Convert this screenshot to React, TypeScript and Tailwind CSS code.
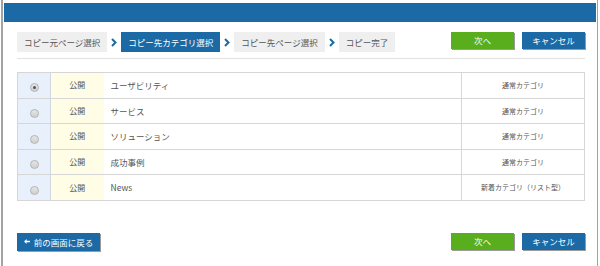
import React from 'react';

const FONT = { fontFamily: '"Noto Sans CJK JP", "Noto Sans", sans-serif' };

const steps = [
  { label: 'コピー元ページ選択', active: false },
  { label: 'コピー先カテゴリ選択', active: true },
  { label: 'コピー先ページ選択', active: false },
  { label: 'コピー完了', active: false },
];

const rows = [
  { name: 'ユーザビリティ', type: '通常カテゴリ', checked: true },
  { name: 'サービス', type: '通常カテゴリ', checked: false },
  { name: 'ソリューション', type: '通常カテゴリ', checked: false },
  { name: '成功事例', type: '通常カテゴリ', checked: false },
  { name: 'News', type: '新着カテゴリ（リスト型）', checked: false },
];

function Chevron() {
  return (
    <svg width="6" height="9" viewBox="0 0 6 9" className="mx-[4px]">
      <path d="M1 1 L4.5 4.5 L1 8" fill="none" stroke="#1b6aa5" strokeWidth="2" />
    </svg>
  );
}

function Radio({ checked }: { checked: boolean }) {
  return (
    <span className="inline-flex h-[9px] w-[9px] items-center justify-center rounded-full border border-[#b5b5b5] bg-gradient-to-b from-[#e6e6e6] to-[#cfcfcf] align-middle">
      {checked && <span className="h-[3px] w-[3px] rounded-full bg-[#555]" />}
    </span>
  );
}

function ActionButtons() {
  return (
    <div className="flex gap-[8px]">
      <button className="h-[17px] w-[63px] bg-[#58ae1c] text-[8.5px] leading-none text-white shadow-[1px_1px_0_#9a9a9a]">
        次へ
      </button>
      <button className="h-[17px] w-[63px] bg-[#1b6aa5] text-[8.5px] leading-none text-white shadow-[1px_1px_0_#9a9a9a]">
        キャンセル
      </button>
    </div>
  );
}

export default function App() {
  return (
    <div className="h-[266px] w-[600px] overflow-hidden bg-white pl-[1px] pr-[2px]" style={FONT}>
      <div className="flex h-full flex-col border-l-2 border-r border-[#a3a3a3] px-[1px] pt-[3px]">
        <div className="h-[19px] bg-[#1b6aa5]" />

        <div className="pl-[13px] pr-[11px]">
          <div className="mt-[10px] flex items-start justify-between">
            <div className="flex items-center">
              {steps.map((s, i) => (
                <React.Fragment key={i}>
                  {i > 0 && <Chevron />}
                  <div
                    className={
                      s.active
                        ? 'flex h-[20px] items-center bg-[#1b6aa5] px-[7px] text-[8.5px] text-white'
                        : 'flex h-[20px] items-center bg-[#efefef] px-[7px] text-[8.5px] text-[#555]'
                    }
                  >
                    {s.label}
                  </div>
                </React.Fragment>
              ))}
            </div>
            <ActionButtons />
          </div>

          <div className="mt-[6px] h-px bg-[#e2e2e2]" />

          <table className="mt-[13px] w-full border-collapse border border-[#d6d6d6] text-[#555]">
            <tbody>
              {rows.map((r, i) => (
                <tr key={i} className="h-[25.6px] border-b border-[#d6d6d6]">
                  <td className="w-[33px] border-r border-[#cfd8e2] bg-[#e8f1fb] p-0 text-center align-middle leading-none">
                    <Radio checked={r.checked} />
                  </td>
                  <td className="w-[53px] bg-[#fffde6] p-0 text-center text-[8px]">公開</td>
                  <td className="p-0 pl-[7px] text-[8.5px]">{r.name}</td>
                  <td className="w-[123px] border-l border-[#d6d6d6] p-0 text-center text-[7px]">{r.type}</td>
                </tr>
              ))}
            </tbody>
          </table>

          <div className="mt-[32px] flex items-start justify-between">
            <button className="flex h-[18px] w-[83px] items-center justify-center gap-[4px] bg-[#1b6aa5] text-[8.5px] leading-none text-white shadow-[1px_1px_0_#9a9a9a]">
              <svg width="6" height="5" viewBox="0 0 7 6">
                <path d="M0 3 L3 0 L3 2 L7 2 L7 4 L3 4 L3 6 Z" fill="#fff" />
              </svg>
              前の画面に戻る
            </button>
            <ActionButtons />
          </div>
        </div>
      </div>
    </div>
  );
}
